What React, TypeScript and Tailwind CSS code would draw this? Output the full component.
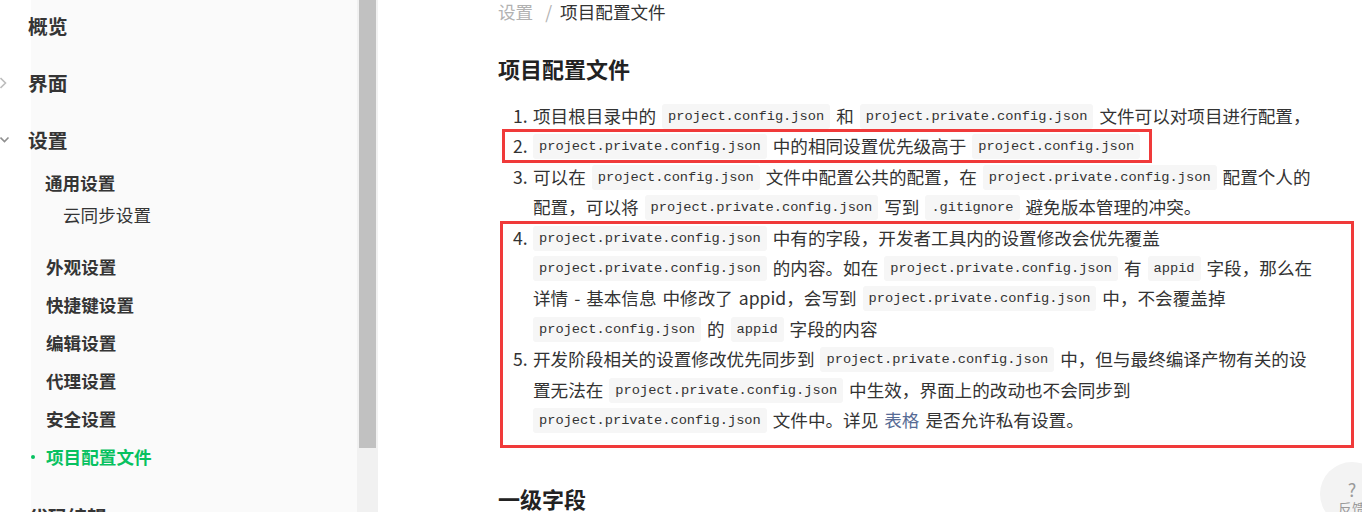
import type { ReactNode } from 'react';

function Code({ children }: { children: ReactNode }) {
  return (
    <code className="whitespace-nowrap rounded-[3px] bg-[#f6f6f6] px-[6px] py-[5px] align-[3px] font-['Liberation_Mono',monospace] text-[13.7px] leading-none text-[#333]">
      {children}
    </code>
  );
}

const PRIV = 'project.private.config.json';
const PUB = 'project.config.json';

function Item({ n, children }: { n: number; children: ReactNode }) {
  return (
    <div className="flex">
      <span className="w-[35px] shrink-0 pl-[15px]">{n}.</span>
      <p className="flex-1">{children}</p>
    </div>
  );
}

const subItems = ['外观设置', '快捷键设置', '编辑设置', '代理设置', '安全设置'];

function Sidebar() {
  return (
    <aside className="flex h-full w-[378px] shrink-0">
      <nav className="w-[357px] bg-[linear-gradient(to_right,#fff_31px,#fafafa_31px)] text-[#353535]">
        <div className="flex h-[52px] items-center pl-[28px] text-[19.8px] font-bold">概览</div>
        <div className="flex h-[62px] items-center text-[19.8px] font-bold">
          <span className="w-[28px]">
            <svg width="10" height="12" viewBox="0 0 10 12" className="-ml-[2px]">
              <path d="M2.5 1l5 5-5 5" fill="none" stroke="#bdbdbd" strokeWidth="1.6" />
            </svg>
          </span>
          界面
        </div>
        <div className="flex h-[52px] items-center text-[19.8px] font-bold">
          <span className="w-[28px]">
            <svg width="10" height="8" viewBox="0 0 10 8">
              <path d="M0.5 1.5l4 4 4-4" fill="none" stroke="#8f8f8f" strokeWidth="1.6" />
            </svg>
          </span>
          设置
        </div>
        <div className="flex h-[34px] items-center pl-[45px] text-[17.6px] font-bold">通用设置</div>
        <div className="flex h-[30px] items-center pl-[63px] text-[17.6px]">云同步设置</div>
        <div className="mt-[18px] text-[17.6px] font-bold">
          {subItems.map((s) => (
            <div key={s} className="flex h-[38px] items-center pl-[46px]">
              {s}
            </div>
          ))}
          <div className="flex h-[38px] items-center text-[#07c160]">
            <span className="ml-[31px] mr-[11px] h-[4px] w-[4px] rounded-full bg-[#07c160]" />
            项目配置文件
          </div>
        </div>
        <div className="mt-[22px] flex h-[38px] items-center pl-[28px] text-[19.8px] font-bold">代码编辑</div>
      </nav>
      <div className="w-[21px] bg-[#f1f1f1] px-[2px]">
        <div className="h-[448px] bg-[#c1c1c1]" />
      </div>
    </aside>
  );
}

export default function App() {
  return (
    <div className="flex h-[512px] w-[1362px] overflow-hidden bg-white font-['Noto_Sans_CJK_SC',sans-serif]">
      <Sidebar />
      <main className="relative flex-1 overflow-hidden pl-[120px]">
        <div className="w-[821px] text-[17.6px] text-[#333]">
          <div className="flex h-[23px] items-center leading-[20px]">
            <span className="text-[#b2b2b2]">设置</span>
            <span className="ml-[12px] mr-[8px] text-[#b2b2b2]">/</span>
            <span>项目配置文件</span>
          </div>

          <h1 className="mt-[30px] text-[22px] font-bold leading-[30px] text-[#222]">项目配置文件</h1>

          <div className="mt-[18px] leading-[30.4px] [word-spacing:2px]">
            <Item n={1}>
              项目根目录中的 <Code>{PUB}</Code> 和 <Code>{PRIV}</Code> 文件可以对项目进行配置，
            </Item>
            <Item n={2}>
              <Code>{PRIV}</Code> 中的相同设置优先级高于 <Code>{PUB}</Code>
            </Item>
            <Item n={3}>
              可以在 <Code>{PUB}</Code> 文件中配置公共的配置，在 <Code>{PRIV}</Code> 配置个人的配置，可以将 <Code>{PRIV}</Code> 写到 <Code>.gitignore</Code> 避免版本管理的冲突。
            </Item>
            <Item n={4}>
              <Code>{PRIV}</Code> 中有的字段，开发者工具内的设置修改会优先覆盖 <Code>{PRIV}</Code> 的内容。如在 <Code>{PRIV}</Code> 有 <Code>appid</Code> 字段，那么在详情 - 基本信息 中修改了 appid，会写到 <Code>{PRIV}</Code> 中，不会覆盖掉 <Code>{PUB}</Code> 的 <Code>appid</Code> 字段的内容
            </Item>
            <Item n={5}>
              开发阶段相关的设置修改优先同步到 <Code>{PRIV}</Code> 中，但与最终编译产物有关的设置无法在 <Code>{PRIV}</Code> 中生效，界面上的改动也不会同步到 <Code>{PRIV}</Code> 文件中。详见 <a className="text-[#576b95]">表格</a> 是否允许私有设置。
            </Item>
          </div>

          <h2 className="mt-[48px] text-[22px] font-bold leading-[30px] text-[#222]">一级字段</h2>
        </div>

        {/* annotation boxes */}
        <div className="pointer-events-none absolute left-[124px] top-[129px] h-[34px] w-[650px] border-[3px] border-[#f03a3a]" />
        <div className="pointer-events-none absolute left-[122px] top-[221px] h-[227px] w-[854px] border-[3px] border-[#f03a3a]" />

        {/* feedback button */}
        <div className="absolute left-[942px] top-[462px] flex h-[64px] w-[64px] flex-col items-center rounded-full bg-[#f3f3f3] pt-[17px] text-[#9a9a9a]">
          <span className="text-[18px] leading-[20px]">?</span>
          <span className="text-[14px] leading-[18px]">反馈</span>
        </div>
      </main>
    </div>
  );
}
